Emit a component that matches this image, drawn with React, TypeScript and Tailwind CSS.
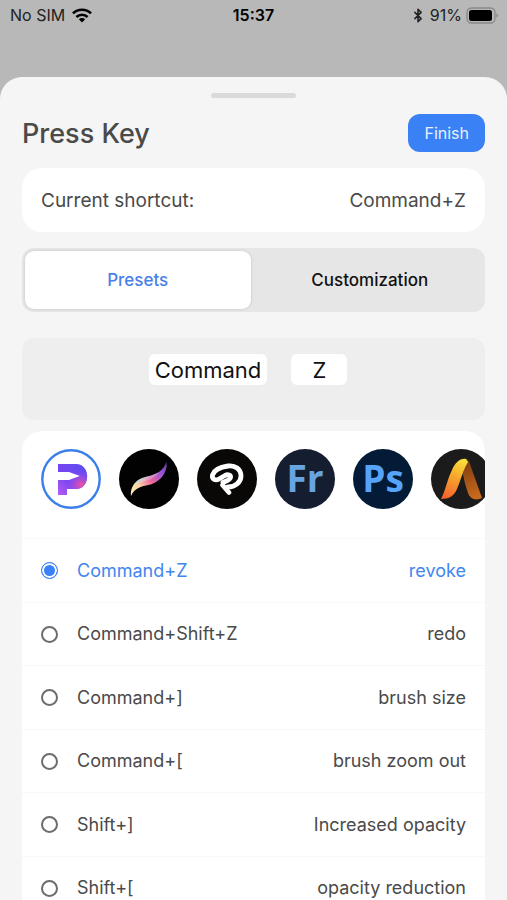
import { useState } from "react";
import { Bluetooth } from "lucide-react";

const shortcuts = [
  { keys: "Command+Z", action: "revoke" },
  { keys: "Command+Shift+Z", action: "redo" },
  { keys: "Command+]", action: "brush size" },
  { keys: "Command+[", action: "brush zoom out" },
  { keys: "Shift+]", action: "Increased opacity" },
  { keys: "Shift+[", action: "opacity reduction" },
];

const StatusBar = () => (
  <header className="grid h-[30px] shrink-0 grid-cols-3 items-center px-2 text-base text-black">
    <div className="flex items-center gap-[7px] pl-[2px] text-[#222]">
      <span>No SIM</span>
      <svg viewBox="0 0 20 15" className="h-[15px] w-5" aria-label="Wi-Fi">
        <g fill="none" stroke="#000" strokeWidth="2.7">
          <path d="M1 5.4C6 .5 14 .5 19 5.4" />
          <path d="M4.4 9C7.6 6 12.4 6 15.6 9" />
        </g>
        <path d="M6.8 11.2c1.8-1.7 4.6-1.7 6.4 0L10 14.5z" />
      </svg>
    </div>
    <span className="text-center font-semibold">15:37</span>
    <div className="flex items-center justify-end gap-1 text-[#222]">
      <Bluetooth className="h-[15px] w-4" strokeWidth={2.5} />
      <span>91%</span>
      <svg viewBox="0 0 33 17" className="h-[17px] w-[33px]" aria-label="Battery">
        <rect x="1" y="1" width="28" height="15" rx="4.5" fill="none" stroke="#888" strokeWidth="1.3" />
        <rect x="3" y="3" width="23" height="11" rx="2.5" />
        <path d="M30.5 6.3c2 .8 2 3.6 0 4.4z" fill="#888" />
      </svg>
    </div>
  </header>
);

const PenLogo = () => (
  <svg viewBox="0 0 60 60" className="size-full">
    <defs>
      <linearGradient id="pen" x1="0" y1="1" x2="1" y2="0">
        <stop offset="0" stopColor="#b45cf5" />
        <stop offset=".4" stopColor="#7a45ef" />
        <stop offset="1" stopColor="#5a4df2" />
      </linearGradient>
      <radialGradient id="penGlow" cx="40" cy="36" r="14" gradientUnits="userSpaceOnUse">
        <stop offset="0" stopColor="#f0509c" />
        <stop offset="1" stopColor="#b04ff0" stopOpacity="0" />
      </radialGradient>
    </defs>
    <circle cx="30" cy="30" r="28.7" fill="#fff" stroke="#3b80ea" strokeWidth="2.4" />
    <path d="M17 15h18c15 0 15 25 0 25h-9v6h-9V31h11l11-4-11-4H17z" fill="url(#pen)" />
    <path d="M17 15h18c15 0 15 25 0 25h-9v6h-9V31h11l11-4-11-4H17z" fill="url(#penGlow)" />
  </svg>
);

const BrushLogo = () => (
  <svg viewBox="0 0 60 60" className="size-full">
    <defs>
      <linearGradient id="brush" x1="12" y1="46" x2="49" y2="14" gradientUnits="userSpaceOnUse">
        <stop offset="0" stopColor="#faf6b0" />
        <stop offset=".25" stopColor="#f9d3a4" />
        <stop offset=".5" stopColor="#f0629b" />
        <stop offset=".75" stopColor="#9c55d8" />
        <stop offset="1" stopColor="#6a3aa8" />
      </linearGradient>
      <linearGradient id="sheen" x1="24" y1="25" x2="29" y2="34" gradientUnits="userSpaceOnUse">
        <stop offset="0" stopColor="#7fd9f2" />
        <stop offset="1" stopColor="#fff" stopOpacity="0" />
      </linearGradient>
    </defs>
    <circle cx="30" cy="30" r="30" fill="#020202" />
    <path
      d="M12 47c-1-7 3-14 9-17 6-3 13-3 19-7 4-3 6-6 7.500-10 1 8-3 15-9 19-5 4-11 4-17 6-5 2-8 5-9.500 9z"
      fill="url(#brush)"
    />
    <path
      d="M15 36c2-3 4-5 6-6 6-3 13-3 19-7-3 5-8 8-13 9-5 1-9 2-12 4z"
      fill="url(#sheen)"
    />
  </svg>
);

const StudioLogo = () => (
  <svg viewBox="0 0 60 60" className="size-full">
    <circle cx="30" cy="30" r="30" fill="#090806" />
    <g fill="none" stroke="#fff" strokeWidth="4.8" strokeLinejoin="round" strokeLinecap="round">
      <path d="M31 38c7 0 13-4.500 13-11 0-7-6-11-13-10-7 1-14 4-15.500 9-.8 4.500 3 6 6.500 4l6-3.500c3-1.500 6-.5 5.500 2-.5 2.500-4.500 3.500-7.500 5" />
      <path d="M25.500 36l6.500 7.500" />
    </g>
  </svg>
);

const PeakLogo = () => (
  <svg viewBox="0 0 60 60" className="size-full">
    <defs>
      <linearGradient id="peak" x1="30" y1="10" x2="16" y2="50" gradientUnits="userSpaceOnUse">
        <stop offset="0" stopColor="#f8e13c" />
        <stop offset=".45" stopColor="#f8a52c" />
        <stop offset="1" stopColor="#f2622d" />
      </linearGradient>
      <linearGradient id="peakSide" x1="34" y1="12" x2="46" y2="48" gradientUnits="userSpaceOnUse">
        <stop offset="0" stopColor="#7c3c12" />
        <stop offset="1" stopColor="#c96a1d" />
      </linearGradient>
    </defs>
    <circle cx="30" cy="30" r="30" fill="#1b1b1b" />
    <path d="M35 10c3 1 4 4 5 8l11 31c-6 3-12 1-14-5-3-8-4-14-5-19z" fill="url(#peakSide)" />
    <path d="M10 50c5-10 6-19 11-29 3-7 8-12 14-11l2 3c-5 8-7 18-11 27-3 7-8 10-16 10z" fill="url(#peak)" />
  </svg>
);

const apps = [
  { name: "Pen", logo: <PenLogo /> },
  { name: "Brush", logo: <BrushLogo /> },
  { name: "Studio", logo: <StudioLogo /> },
  {
    name: "Fresco",
    logo: (
      <span className="flex size-full items-center justify-center rounded-full bg-[#151e30] pb-1 font-['Open_Sans',sans-serif] text-[37px] leading-none font-bold text-[#68a4e0]">
        Fr
      </span>
    ),
  },
  {
    name: "Photoshop",
    logo: (
      <span className="flex size-full items-center justify-center rounded-full bg-[#041b38] pb-1 font-['Open_Sans',sans-serif] text-[37px] leading-none font-bold text-[#55a4fa]">
        Ps
      </span>
    ),
  },
  { name: "Peak", logo: <PeakLogo /> },
];

const App = () => {
  const [selected, setSelected] = useState("Command+Z");

  return (
    <div className="flex h-screen flex-col overflow-hidden bg-[#b8b8b8] font-['Inter',sans-serif] text-[#4a4a4a]">
      <StatusBar />

      <main className="mt-[47px] flex min-h-0 flex-1 flex-col rounded-t-[22px] bg-[#f5f5f5] px-[22px] pt-4">
        <div className="h-[5px] w-[85px] shrink-0 self-center rounded-full bg-[#dadada]" />

        <div className="mt-4 flex shrink-0 items-center justify-between">
          <h1 className="pt-[2px] text-[27px] leading-9 font-medium">Press Key</h1>
          <button className="h-[38px] rounded-xl bg-[#3a81f6] px-4 text-base text-[#e8f1ff]">
            Finish
          </button>
        </div>

        {/* Current shortcut */}
        <div className="mt-4 flex h-16 shrink-0 items-center justify-between rounded-[20px] bg-white px-[19px] pt-[2px] text-[19px]">
          <span>Current shortcut:</span>
          <span>{selected}</span>
        </div>

        {/* Tabs */}
        <div className="mt-4 grid h-16 shrink-0 grid-cols-2 rounded-xl bg-[#e6e6e6] p-[3px] text-[17px] font-medium">
          <button className="mr-[3px] rounded-[9px] bg-white pt-[2px] text-[#4a80e8] shadow-[0_0_2px_1px_#d4d4d4]">
            Presets
          </button>
          <button className="pt-[2px] pl-1 text-[#111]">Customization</button>
        </div>

        {/* Pressed keys */}
        <div className="mt-[26px] flex h-[82px] shrink-0 justify-center gap-6 rounded-xl bg-[#eee] pt-4 pr-[11px] text-[22px] text-[#111]">
          <kbd className="h-[31px] rounded-md bg-white px-[6px] font-['Inter',sans-serif] leading-8">
            Command
          </kbd>
          <kbd className="h-[31px] w-14 rounded-md bg-white text-center font-['Inter',sans-serif] leading-8">
            Z
          </kbd>
        </div>

        {/* Preset list */}
        <section className="mt-[11px] min-h-0 flex-1 overflow-y-auto rounded-t-[20px] bg-white [scrollbar-width:none]">
          <div className="flex gap-[18px] overflow-x-auto px-[19px] pt-[18px] pb-[29px] [scrollbar-width:none]">
            {apps.map((app) => (
              <button key={app.name} aria-label={app.name} className="size-[60px] shrink-0">
                {app.logo}
              </button>
            ))}
          </div>
          {shortcuts.map(({ keys, action }) => (
            <label
              key={keys}
              className="flex h-[63px] items-center border-t border-[#f8f8f8] px-[19px] text-lg even:h-16 has-checked:text-[#4285f0]"
            >
              <input
                type="radio"
                name="shortcut"
                checked={selected === keys}
                onChange={() => setSelected(keys)}
                className="mr-[19px] size-[17px] appearance-none rounded-full border-2 border-[#6c6c6c] checked:border checked:border-[#3a80f6] checked:bg-[#3a80f6] checked:shadow-[inset_0_0_0_2px_#fff]"
              />
              <span>{keys}</span>
              <span className="ml-auto">{action}</span>
            </label>
          ))}
        </section>
      </main>
    </div>
  );
};

export default App;
